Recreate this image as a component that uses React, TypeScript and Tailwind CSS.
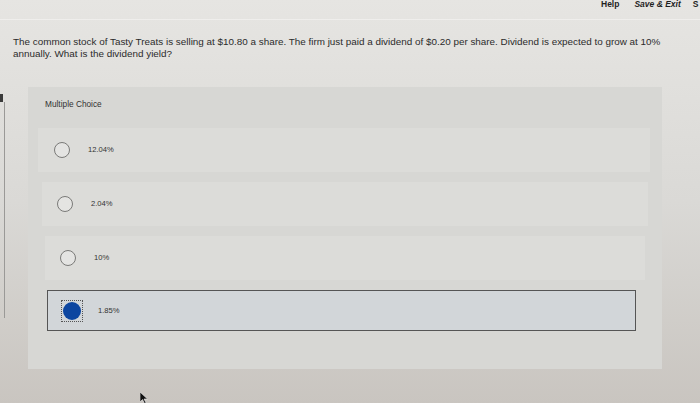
const choices = [
  { label: '12.04%', row: 'ml-[10px] w-[612px]', radio: 'ml-[16px]' },
  { label: '2.04%', row: 'ml-[14px] w-[606px]', radio: 'ml-[15px]' },
  { label: '10%', row: 'ml-[17px] w-[600px]', radio: 'ml-[15px]' },
]

function Radio({ className }: { className?: string }) {
  return <span className={`h-[16px] w-[16px] shrink-0 rounded-full border-[1.5px] border-[#7a7a78] bg-[#e4e4e2] ${className ?? ''}`} />
}

export default function App() {
  return (
    <div className="relative h-[403px] w-[700px] overflow-hidden bg-gradient-to-b from-[#e6e5e2] via-[#dad9d6] to-[#c9c5c0] font-['Liberation_Sans',sans-serif] text-[#2d2d2d]">
      {/* top bar */}
      <div className="flex h-[20px] items-start whitespace-nowrap border-b border-[#efeeec] text-[8.5px] font-bold leading-[9px] text-[#1f1f1f]">
        <span className="ml-[601px]">Help</span>
        <span className="ml-[15px] italic">Save &amp; Exit</span>
        <span className="ml-[12px]">S</span>
      </div>

      {/* question */}
      <p className="mt-[16px] w-[690px] pl-[13px] text-[9.9px] leading-[12px] text-[#2b2b2b]">
        The common stock of Tasty Treats is selling at $10.80 a share. The firm just paid a dividend of $0.20 per share. Dividend is expected to grow at 10% annually. What is the dividend yield?
      </p>

      <div className="mt-[27px] flex">
        {/* side panel edge */}
        <div className="flex w-[28px] flex-col">
          <span className="mt-[7px] h-[8px] w-[3px] bg-[#3a3a3a]" />
          <span className="ml-[4px] h-[216px] w-[1px] bg-[#9a9997]" />
        </div>

        {/* multiple choice card */}
        <div className="h-[282px] w-[634px] bg-[#d7d7d4] pt-[12px]">
          <div className="pl-[17px] text-[8.3px] leading-[10px] text-[#333]">Multiple Choice</div>

          <div className="mt-[19px] flex flex-col gap-[10px]">
            {choices.map((c) => (
              <div key={c.label} className={`flex h-[44px] items-center bg-[#dcdcd9] ${c.row}`}>
                <Radio className={c.radio} />
                <span className="ml-[18px] text-[7.6px] text-[#333]">{c.label}</span>
              </div>
            ))}

            <div className="ml-[19px] flex h-[41px] w-[589px] items-center border border-[#555] bg-[#d2d6d9]">
              <span className="ml-[13px] flex h-[22px] w-[22px] items-center justify-center border border-dotted border-[#555]">
                <span className="h-[18px] w-[18px] rounded-full bg-[#0d46a0]" />
              </span>
              <span className="ml-[15px] text-[7.6px] text-[#333]">1.85%</span>
            </div>
          </div>
        </div>
      </div>

      {/* mouse pointer */}
      <svg className="absolute left-[140px] top-[392px]" width="8" height="12" viewBox="0 0 8 12">
        <path d="M0 0 L0 10 L2.5 7.5 L4.5 11.5 L6 10.8 L4 7 L7.5 7 Z" fill="#111" stroke="#eee" strokeWidth="0.6" />
      </svg>
    </div>
  )
}
